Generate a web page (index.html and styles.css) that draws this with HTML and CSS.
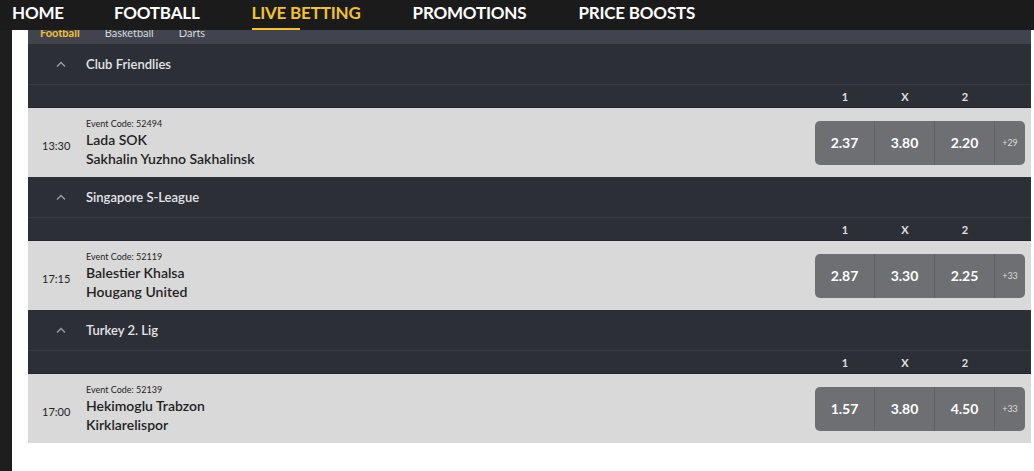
FILE: index.html
```html
<!DOCTYPE html>
<html lang="en">
<head>
    <meta charset="UTF-8">
    <meta name="viewport" content="width=device-width, initial-scale=1.0">
    <title>Live Betting</title>
    <link rel="stylesheet" href="styles.css">
</head>
<body>

<nav class="topnav">
    <a href="#">HOME</a>
    <a href="#">FOOTBALL</a>
    <a href="#" class="active">LIVE BETTING</a>
    <a href="#">PROMOTIONS</a>
    <a href="#">PRICE BOOSTS</a>
</nav>

<div class="page">
    <div class="rail"></div>

    <main class="board">
        <div class="sport-tabs">
            <div class="sport-tabs-inner">
                <span class="tab active">Football</span>
                <span class="tab">Basketball</span>
                <span class="tab">Darts</span>
            </div>
        </div>

        <section class="league">
            <div class="league-head">
                <svg class="chevron" width="10" height="6" viewBox="0 0 10 6"><polyline points="1,5.5 5,1.5 9,5.5" fill="none" stroke="#9a9ca3" stroke-width="1.4"/></svg>
                <span>Club Friendlies</span>
            </div>
            <div class="market-head">
                <span>1</span><span>X</span><span>2</span><span class="more-col"></span>
            </div>
            <div class="match">
                <div class="time">13:30</div>
                <div class="teams">
                    <div class="code">Event Code: 52494</div>
                    <div class="team">Lada SOK</div>
                    <div class="team">Sakhalin Yuzhno Sakhalinsk</div>
                </div>
                <div class="odds">
                    <span class="price">2.37</span>
                    <span class="price">3.80</span>
                    <span class="price">2.20</span>
                    <span class="more">+29</span>
                </div>
            </div>
        </section>

        <section class="league">
            <div class="league-head">
                <svg class="chevron" width="10" height="6" viewBox="0 0 10 6"><polyline points="1,5.5 5,1.5 9,5.5" fill="none" stroke="#9a9ca3" stroke-width="1.4"/></svg>
                <span>Singapore S-League</span>
            </div>
            <div class="market-head">
                <span>1</span><span>X</span><span>2</span><span class="more-col"></span>
            </div>
            <div class="match">
                <div class="time">17:15</div>
                <div class="teams">
                    <div class="code">Event Code: 52119</div>
                    <div class="team">Balestier Khalsa</div>
                    <div class="team">Hougang United</div>
                </div>
                <div class="odds">
                    <span class="price">2.87</span>
                    <span class="price">3.30</span>
                    <span class="price">2.25</span>
                    <span class="more">+33</span>
                </div>
            </div>
        </section>

        <section class="league">
            <div class="league-head">
                <svg class="chevron" width="10" height="6" viewBox="0 0 10 6"><polyline points="1,5.5 5,1.5 9,5.5" fill="none" stroke="#9a9ca3" stroke-width="1.4"/></svg>
                <span>Turkey 2. Lig</span>
            </div>
            <div class="market-head">
                <span>1</span><span>X</span><span>2</span><span class="more-col"></span>
            </div>
            <div class="match">
                <div class="time">17:00</div>
                <div class="teams">
                    <div class="code">Event Code: 52139</div>
                    <div class="team">Hekimoglu Trabzon</div>
                    <div class="team">Kirklarelispor</div>
                </div>
                <div class="odds">
                    <span class="price">1.57</span>
                    <span class="price">3.80</span>
                    <span class="price">4.50</span>
                    <span class="more">+33</span>
                </div>
            </div>
        </section>
    </main>
</div>

</body>
</html>
```

FILE: styles.css
```css
body {
    font-family: 'Lato', 'Liberation Sans', sans-serif;
    margin: 0;
    padding: 0;
    background-color: #fff;
    height: 100vh;
    overflow: hidden;
}

/* top navigation */
.topnav {
    display: flex;
    gap: 52px;
    height: 30px;
    padding-left: 12px;
    background-color: #1b1b1b;
    position: relative;
    z-index: 2;
}

.topnav a {
    color: #fff;
    text-decoration: none;
    font-size: 17px;
    font-weight: 700;
    line-height: 26px;
    letter-spacing: -0.2px;
}

.topnav a:first-child {
    margin-right: -2px;
}

.topnav a.active {
    color: #f3c22c;
    height: 30px;
    background: linear-gradient(#f3c22c, #f3c22c) no-repeat left bottom / 48px 2px;
}

.page {
    display: flex;
    height: calc(100vh - 30px);
}

.rail {
    width: 12px;
    background-color: #1e1e1e;
}

.board {
    flex: 1;
    margin-left: 16px;
    margin-right: 3px;
}

/* sport tabs, partly hidden under the nav */
.sport-tabs {
    height: 14px;
    overflow: hidden;
    background-color: #41444e;
}

.sport-tabs-inner {
    display: flex;
    gap: 25px;
    margin-top: -4px;
    padding-left: 12px;
}

.tab {
    font-size: 11px;
    line-height: 14px;
    color: #d6d7db;
}

.tab.active {
    color: #f3c22c;
    font-weight: 700;
}

/* league block */
.league-head {
    display: flex;
    align-items: center;
    height: 40px;
    background-color: #2d2f37;
    border-bottom: 1px solid #3b3d46;
    color: #e4e5e8;
    font-size: 13px;
    font-weight: 600;
}

.chevron {
    margin-left: 28px;
    margin-right: 20px;
}

.market-head {
    display: flex;
    justify-content: flex-end;
    height: 22px;
    padding-right: 6px;
    background-color: #2d2f37;
    border-bottom: 1px solid #24262c;
}

.market-head span {
    width: 60px;
    text-align: center;
    color: #e0e0e0;
    font-size: 11px;
    font-weight: 700;
    line-height: 24px;
}

.market-head .more-col {
    width: 30px;
}

.match {
    display: flex;
    align-items: center;
    height: 69px;
    padding-right: 6px;
    background-color: #d9d9d9;
    color: #1f1f1f;
}

.time {
    width: 44px;
    padding-left: 14px;
    padding-top: 6px;
    font-size: 11px;
}

.teams {
    flex: 1;
    padding-top: 1px;
}

.code {
    font-size: 9px;
    line-height: 12px;
}

.team {
    font-size: 14px;
    font-weight: 600;
    line-height: 19px;
}

.odds {
    display: flex;
    height: 44px;
    background-color: #6d6f72;
    border-radius: 5px;
    overflow: hidden;
}

.odds span {
    display: flex;
    align-items: center;
    justify-content: center;
    color: #fff;
}

.price {
    width: 59px;
    border-right: 1px solid #5f6164;
    font-size: 14px;
    font-weight: 700;
}

.more {
    width: 30px;
    font-size: 9px;
    color: #dcdcdc !important;
}
```
